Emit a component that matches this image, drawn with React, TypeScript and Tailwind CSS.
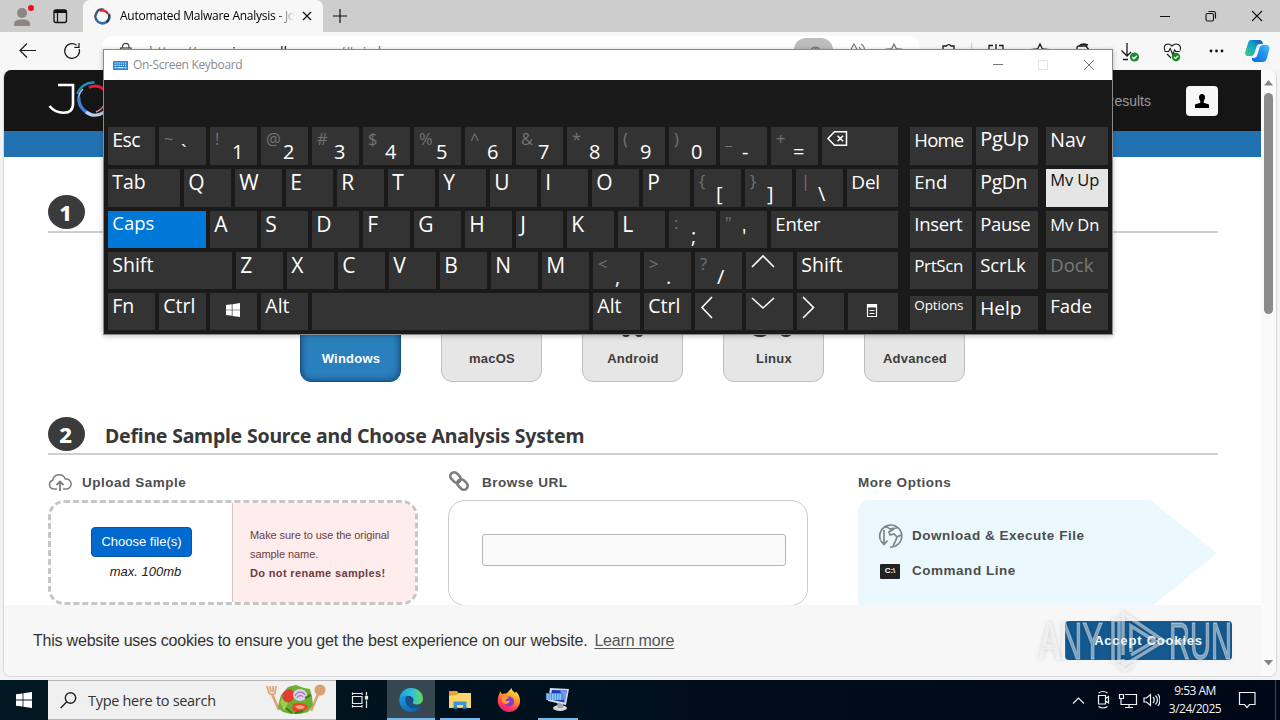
import React from "react";

type Key = {
  label?: string;
  alt?: string;
  w: string;
  icon?: React.ReactNode;
  cls?: string;
  box?: string;
};

const U = "w-[47px]";
const big = "text-[21px] leading-[26px]";
const k = (label: string, w = U, cls = "text-[19.5px] leading-[26px]", box = "bg-[#333333]"): Key => ({ label, w, cls, box });
const l = (label: string): Key => k(label, U, big);
const d = (alt: string, label: string): Key => ({ label, alt, w: U });
const ic = (icon: React.ReactNode, w = U): Key => ({ icon, w });

const Chevron = ({ points }: { points: string }) => (
  <svg width="47" height="37" fill="none" stroke="#fff" strokeWidth="1.6">
    <polyline points={points} />
  </svg>
);

const WinLogo = ({ size }: { size: number }) => (
  <svg width={size} height={size} viewBox="0 0 16 16" fill="#fff">
    <path d="M0 2.3 6.6 1.4V7.6H0zM7.4 1.3 16 0V7.6H7.4zM0 8.4H6.6V14.6L0 13.7zM7.4 8.4H16V16L7.4 14.8z" />
  </svg>
);

const rows: { h: string; keys: Key[]; side: Key[] }[] = [
  {
    h: "h-[38px]",
    keys: [
      k("Esc", U, "text-[19.5px] leading-[26px] tracking-[-0.6px]"),
      d("~", "`"), d("!", "1"), d("@", "2"), d("#", "3"), d("$", "4"), d("%", "5"), d("^", "6"),
      d("&", "7"), d("*", "8"), d("(", "9"), d(")", "0"), d("_", "-"), d("+", "="),
      ic(
        <svg width="76" height="38" fill="none" stroke="#fff" strokeWidth="1.5">
          <path d="M12.5 4.8H24.5V18.2H12.5L6 11.5zM15.500 8.700l5.600 5.600M21.100 8.700l-5.600 5.600" />
        </svg>,
        "w-[76px]",
      ),
    ],
    side: [
      k("Home", "w-[62px]", "text-[18.5px] leading-[26px] tracking-[-0.8px]"),
      k("PgUp", "w-[62px]", "text-[20px] leading-[24px] tracking-[-0.3px]"),
      k("Nav", "w-[62px]"),
    ],
  },
  {
    h: "h-[38px]",
    keys: [
      k("Tab", "w-[72px]"), l("Q"), l("W"), l("E"), l("R"), l("T"), l("Y"), l("U"), l("I"), l("O"), l("P"),
      d("{", "["), d("}", "]"), d("|", "\\"), k("Del", "w-[51px]", "text-[19px] leading-[26px] tracking-[-0.2px]"),
    ],
    side: [
      k("End", "w-[62px]", "text-[18.5px] leading-[26px]"),
      k("PgDn", "w-[62px]", "text-[19.5px] leading-[25px] tracking-[-0.4px]"),
      k("Mv Up", "w-[62px]", "text-[16.5px] leading-[22px] tracking-[-0.1px] text-[#111]", "bg-[#e5e5e5]"),
    ],
  },
  {
    h: "h-[37px]",
    keys: [
      k("Caps", "w-[98px]", "text-[18.5px] leading-[24px]", "bg-[#0078d7]"),
      l("A"), l("S"), l("D"), l("F"), l("G"), l("H"), l("J"), l("K"), l("L"),
      d(":", ";"), d("\"", "'"), k("Enter", "w-[127px]", "text-[18.5px] leading-[26px] tracking-[-0.2px]"),
    ],
    side: [
      k("Insert", "w-[62px]", "text-[18.5px] leading-[26px] tracking-[-0.3px]"),
      k("Pause", "w-[62px]", "text-[18.5px] leading-[26px] tracking-[-0.4px]"),
      k("Mv Dn", "w-[62px]", "text-[16.5px] leading-[28px] tracking-[-0.1px]"),
    ],
  },
  {
    h: "h-[37px]",
    keys: [
      k("Shift", "w-[124px]"), l("Z"), l("X"), l("C"), l("V"), l("B"), l("N"), l("M"),
      d("<", ","), d(">", "."), d("?", "/"), ic(<Chevron points="6,15 17,4 28,15" />), k("Shift", "w-[101px]"),
    ],
    side: [
      k("PrtScn", "w-[62px]", "text-[17px] leading-[28px] tracking-[-0.4px]"),
      k("ScrLk", "w-[62px]", "text-[18.5px] leading-[26px] tracking-[-0.1px]"),
      k("Dock", "w-[62px]", "text-[18.5px] leading-[26px] text-[#7a7a7a]"),
    ],
  },
  {
    h: "h-[37px]",
    keys: [
      k("Fn"), k("Ctrl"),
      ic(<div className="flex w-full justify-center pr-[2px] pt-[10px]"><WinLogo size={14} /></div>),
      k("Alt"), ic(null, "w-[277px]"), k("Alt"), k("Ctrl"),
      ic(<Chevron points="17,4 7,14.5 17,25" />),
      ic(<Chevron points="6,5 17,15 28,5" />),
      ic(<Chevron points="6,4 16.5,14.5 6,25" />),
      ic(
        <svg width="50" height="37" fill="none" stroke="#fff" strokeWidth="1.2">
          <path d="M19.500 11.500h9v12h-9zM21.500 17.500h5M21.500 20.500h5" />
          <path d="M19 13h10" strokeWidth="3" />
        </svg>,
        "w-[50px]",
      ),
    ],
    side: [
      k("Options", "w-[62px]", "text-[13.5px] leading-[19px] tracking-[-0.1px]", "bg-[#333333] mt-[3px]"),
      k("Help", "w-[62px]", "text-[19px] leading-[25px]", "bg-[#333333] mt-[3px]"),
      k("Fade", "w-[62px]", "text-[18.5px] leading-[26px]"),
    ],
  },
];

function KeyCap({ w, label, alt, icon, cls, box }: Key) {
  if (icon !== undefined) return <div className={`${w} shrink-0 overflow-hidden bg-[#333333]`}>{icon}</div>;
  if (alt)
    return (
      <div className={`${w} flex shrink-0 bg-[#333333]`}>
        <span className="w-[22px] shrink-0 pl-[5px] text-[16.5px] leading-[23px] text-[#737373]">{alt}</span>
        <span className="mt-[13px] text-[20px] leading-[24px] text-white">{label}</span>
      </div>
    );
  return (
    <div className={`${w} ${box ?? "bg-[#333333]"} shrink-0 whitespace-nowrap pl-[4.3px] text-white`}>
      <span className={`${cls} block`}>{label}</span>
    </div>
  );
}

function Keyboard() {
  return (
    <div className="absolute left-[103px] top-[49px] flex h-[286px] w-[1010px] flex-col border border-[#8a8a8a] bg-[#1a1a1a] font-['Open_Sans',sans-serif] shadow-[0_1px_5px_rgba(0,0,0,.25)]">
      <div className="flex h-[30px] shrink-0 items-center bg-white pl-[9px]">
        <svg width="15" height="9" viewBox="0 0 15 9">
          <rect width="15" height="9" rx=".6" fill="#2d84d0" />
          <path d="M1.5 2h12M1.5 4.3h12" stroke="#fff" strokeWidth="1.1" strokeDasharray="1.2 .9" />
          <path d="M1.5 6.8h2M4.5 6.8h6M11.5 6.8h2" stroke="#fff" strokeWidth="1.1" />
        </svg>
        <span className="ml-[5px] text-[12px] leading-[16px] tracking-[-0.33px] text-[#8c8c8c]">On-Screen Keyboard</span>
        <svg className="ml-auto mr-[17px]" width="102" height="12" fill="none">
          <path d="M0 5.5h10" stroke="#777" />
          <rect x="45.5" y="1.5" width="9" height="9" stroke="#e4e4e4" />
          <path d="M91 1l10 10M101 1 91 11" stroke="#777" />
        </svg>
      </div>
      <div className="flex flex-col gap-[4px] pl-[4px] pt-[47px]">
        {rows.map((r, i) => (
          <div key={i} className={`flex ${r.h}`}>
            <div className="flex gap-[4px]">{r.keys.map((x, j) => <KeyCap key={j} {...x} />)}</div>
            <div className="ml-[12px] flex gap-[4px]">{r.side.slice(0, 2).map((x, j) => <KeyCap key={j} {...x} />)}</div>
            <div className="ml-[8px] flex">{r.side.slice(2).map((x, j) => <KeyCap key={j} {...x} />)}</div>
          </div>
        ))}
      </div>
    </div>
  );
}

function TabStrip() {
  return (
    <div className="flex h-[32px] shrink-0 bg-[#cdcdcd] font-['Open_Sans',sans-serif]">
      <svg width="83" height="32" className="shrink-0" fill="none">
        <circle cx="22" cy="13" r="5" fill="#8c8582" />
        <path d="M14 26v-2.5c0-2.8 3.6-4 8-4s8 1.2 8 4V26z" fill="#8c8582" />
        <circle cx="31" cy="8" r="3" fill="#e81123" />
        <rect x="54" y="10" width="12.5" height="12.5" rx="2" stroke="#111" strokeWidth="1.3" />
        <path d="M54 11.5h12.5" stroke="#111" strokeWidth="3" />
        <path d="M57.5 12v10" stroke="#111" strokeWidth="1.2" />
      </svg>
      <div className="flex w-[240px] items-center rounded-t-[7px] bg-[#f7f7f7] pl-[11px]">
        <svg width="17" height="17" viewBox="0 0 17 17" fill="none" className="shrink-0">
          <path d="M3 3.5A7 7 0 0 1 9.5 1.5" stroke="#2b3f60" strokeWidth="2" />
          <path d="M6 2.8A6.2 6.2 0 0 1 14 6" stroke="#e0243a" strokeWidth="2.4" />
          <path d="M14.8 6A7 7 0 0 1 12 14.5" stroke="#24425f" strokeWidth="2.6" />
          <path d="M12.5 14A7 7 0 0 1 2.2 11.5" stroke="#2f6db0" strokeWidth="2.6" />
          <path d="M2.4 12A7 7 0 0 1 3.5 3.6" stroke="#3d5a80" strokeWidth="2.4" />
        </svg>
        <span className="ml-[9px] w-[174px] overflow-hidden whitespace-nowrap bg-gradient-to-r from-black from-88% to-[#f7f7f7] bg-clip-text text-[12px] leading-[18px] tracking-[-0.25px] text-transparent">
          Automated Malware Analysis - Joe Sandbox
        </span>
        <svg width="10" height="10" className="ml-[8px] shrink-0" stroke="#111" strokeWidth="1.3"><path d="M1 1l8 8M9 1 1 9" /></svg>
      </div>
      <svg width="14" height="14" className="ml-[10px] mt-[9px]" stroke="#111" strokeWidth="1.2"><path d="M7 0v14M0 7h14" /></svg>
      <svg width="104" height="12" className="ml-auto mr-[16px] mt-[10px]" fill="none" stroke="#111" strokeWidth="1.1">
        <path d="M0 6.5h10M92 1l10 10M102 1 92 11" />
        <rect x="46" y="3.5" width="7.5" height="7.5" rx="1.5" />
        <path d="M48.5 1.5h5a2 2 0 0 1 2 2v5" />
      </svg>
    </div>
  );
}

function Toolbar() {
  return (
    <div className="flex h-[38px] shrink-0 bg-[#f7f7f7] font-['Open_Sans',sans-serif]">
      <svg width="103" height="38" fill="none" stroke="#1a1a1a" strokeWidth="1.2" className="shrink-0">
        <path d="M36 18.5H20.5M27 11.5l-7 7 7 7" />
        <path d="M79.3 17.2A7.4 7.4 0 1 1 76.5 13M79 11v4.4h-4.6" />
      </svg>
      <div className="mt-[4px] flex h-[30px] w-[816px] rounded-[9px] bg-white">
        <svg width="46" height="30" fill="none" stroke="#444" strokeWidth="1.2">
          <path d="M19.5 12V10.500a3.2 3.2 0 0 1 6.4 0V12" />
          <rect x="17.5" y="12" width="10.5" height="9" />
        </svg>
        <span className="mt-[5px] text-[14px] leading-[21px] text-[#777] tracking-[-0.1px]">
          https://<span className="tracking-[0px] text-black">www.joesandbox.com</span>/<span className="tracking-[-1px]">#windows</span>
        </span>
        <svg width="130" height="30" className="ml-auto" fill="none" stroke="#777" strokeWidth="1.2">
          <rect x="5" y="2" width="39" height="26" rx="12" fill="#bdbdbd" stroke="none" />
          <path d="M22 14a5 5 0 0 1 9 0M24.5 14a2.5 2.5 0 0 1 4.5 0" />
          <path d="M60 17l5-9 5 9M72 8a6 6 0 0 1 3 7M70 11a4 4 0 0 1 1.500 4" />
          <path d="M105 8l2.200 4.600 5.200.6-4 3.500 1 5-4.400-2.500-4.400 2.500 1-5-4-3.500 5.200-.6z" />
        </svg>
      </div>
      <svg width="361" height="38" fill="none" stroke="#1a1a1a" strokeWidth="1.3" className="shrink-0">
        <path d="M24 20v-6h3.500a2.500 2.500 0 0 1 4.500 0h3v6" />
        <path d="M52.500 11v14" stroke="#d0d0d0" />
        <path d="M74 13.500h-4v8M77 12v10M80 13.500h4v8" />
        <path d="M121 12l2.400 5 5.600.6-4 4h-8l-4-4 5.600-.6z" />
        <path d="M158 18v-2a2 2 0 0 1 2-2h7l3 4M160 14a7 7 0 0 1 5-2l4 1" />
        <path d="M208 11v13M202.500 18.500 208 24l4-4M204 27.500h5" />
        <circle cx="215.500" cy="25" r="4.600" fill="#23843b" stroke="none" />
        <path d="M213.300 25l1.600 1.700 2.900-3" stroke="#fff" />
        <path d="M246 19c-2-4 0-7 3-7 2 0 3 1 4 2 1-1 2-2 4-2 4 0 5.500 3.500 4 6.500M245.500 19.500h4l1.700-3 2.500 6 2-4.500 1 1.500h4M248 22l4 4" strokeWidth="1.100" />
        <circle cx="257" cy="25" r="4.200" fill="#16851b" stroke="none" />
        <path d="M255 25l1.500 1.600 2.700-2.900" stroke="#fff" />
        <g fill="#111" stroke="none"><circle cx="292" cy="19" r="1.400" /><circle cx="297.500" cy="19" r="1.400" /><circle cx="303" cy="19" r="1.400" /></g>
        <defs>
          <linearGradient id="cpA" x1="0" y1="1" x2="1" y2="0"><stop offset="0" stopColor="#39c97d" /><stop offset=".5" stopColor="#18a9c9" /><stop offset="1" stopColor="#0d55b8" /></linearGradient>
          <linearGradient id="cpB" x1="0" y1="1" x2="1" y2="0"><stop offset="0" stopColor="#0b6fd6" /><stop offset=".6" stopColor="#2394f0" /><stop offset="1" stopColor="#45c7f5" /></linearGradient>
        </defs>
        <path d="M332 8h8c2.500 0 3.500 1.500 4 4h-3c-2 0-3 1-3.500 3l-2 6c-.6 2-1.500 3-3.500 3h-2.500c-3 0-3.800-2-3-4.500L329 11c.6-2 1.500-3 3-3z" fill="url(#cpA)" stroke="none" />
        <path d="M344 13h3c3 0 4 2 3.200 4.500L348 26c-.6 2.500-2 4-4.500 4h-7c-2.500 0-3.500-1.500-3.800-4h2c2 0 3-1 3.600-3l2-6.500c.6-2.300 1.500-3.500 3.700-3.500z" fill="url(#cpB)" stroke="none" />
      </svg>
    </div>
  );
}

const label = "text-[13.5px] font-bold leading-[16px] tracking-[0.52px] text-[#4d4d4d]";

function StepHead({ n, title }: { n: string; title?: string }) {
  return (
    <div className="ml-[44px] mr-[43px] flex h-[38px] shrink-0 items-start border-b-2 border-[#cfcfcf] font-['Noto_Sans',sans-serif]">
      <span className="flex h-[34px] w-[37px] items-center justify-center rounded-[50%] bg-[#3b3b3b] pr-[2px] text-[22px] font-extrabold leading-none text-white">{n}</span>
      {title && <span className="ml-[20px] mt-[6px] whitespace-nowrap text-[19.5px] font-bold leading-[26px] tracking-[-0.22px] text-[#383838]">{title}</span>}
    </div>
  );
}

function Tile({ name, active, children }: { name: string; active?: boolean; children?: React.ReactNode }) {
  return (
    <div
      className={`flex h-[101px] w-[101px] flex-col items-center justify-end rounded-[11px] border pb-[14px] pl-px text-[13px] font-bold leading-[16px] tracking-[0.25px] ${
        active ? "border-[#17507c] bg-[#2980bd] text-white shadow-[inset_0_0_7px_rgba(0,30,70,.65)]" : "border-[#bfbfbf] bg-[#e6e6e6] text-[#3d3d3d]"
      }`}
    >
      {children}
      {name}
    </div>
  );
}

function Page() {
  return (
    <div className="mx-[3px] flex h-[607px] shrink-0 overflow-hidden rounded-[8px] border border-t-0 border-[#d8d8d8] bg-white font-['Liberation_Sans',Arial,sans-serif]">
      <div className="flex w-[1257px] shrink-0 flex-col">
        <div className="flex h-[61px] shrink-0 items-center bg-[#151515]">
          <svg width="100" height="61" fill="none" className="shrink-0">
            <path d="M54 15h15v19c0 6-3.500 8.700-9.500 8.700S49.500 41 45.500 36" stroke="#fff" strokeWidth="2.600" />
            <path d="M73.500 24a16 16 0 0 1 17-11.500" stroke="#1f8fc0" strokeWidth="2.500" />
            <path d="M85 17.500a14 14 0 0 1 15 2" stroke="#ee1c3a" strokeWidth="3" />
            <path d="M79 19a15 15 0 0 0-3 18" stroke="#9fc3ee" strokeWidth="1.500" />
            <path d="M75 27a16 16 0 0 0 12 17" stroke="#3f7fd6" strokeWidth="3.200" />
            <path d="M82 42a14 14 0 0 0 18 0" stroke="#bcd0ee" strokeWidth="3" />
            <path d="M92 42a16 16 0 0 0 8-7" stroke="#e58a92" strokeWidth="1.500" />
          </svg>
          <span className="ml-auto mr-[35px] text-[14px] font-light leading-[18px] text-[#9b9b9b]">Results</span>
          <span className="mr-[43px] flex h-[30px] w-[32px] items-center justify-center rounded-[4px] bg-[#f7f7f7]">
            <svg width="14" height="14"><path d="M7 0c2 0 3 1.500 3 3.500C10 5.500 9 6.500 8.700 7v1.800L14 10.500V14H0v-3.500L5.300 8.800V7C5 6.500 4 5.500 4 3.500 4 1.500 5 0 7 0z" fill="#000" /></svg>
          </span>
        </div>
        <div className="h-[26px] shrink-0 bg-[#2271b1]" />
        <div className="h-[38px] shrink-0" />
        <StepHead n="1" />
        <div className="mt-[48px] flex shrink-0 gap-[40px] pl-[296px]">
          <Tile name="Windows" active />
          <Tile name="macOS" />
          <Tile name="Android">
            <svg width="24" height="8" className="mb-[12px]" fill="#333"><rect x="1" y="-5" width="8" height="11" rx="4" /><rect x="14" y="-5" width="8" height="11" rx="4" /></svg>
          </Tile>
          <Tile name="Linux">
            <svg width="44" height="8" className="mb-[12px]" fill="#333"><ellipse cx="8" cy="2" rx="8" ry="4" /><ellipse cx="34" cy="2" rx="6" ry="4" /></svg>
          </Tile>
          <Tile name="Advanced" />
        </div>
        <div className="h-[35px] shrink-0" />
        <StepHead n="2" title="Define Sample Source and Choose Analysis System" />
        <div className="flex h-[150px] shrink-0 overflow-hidden pl-[44px]">
          <div className="w-[370px]">
            <div className="flex h-[45px] items-center pt-[11px]">
              <svg width="24" height="18" fill="none" stroke="#7d7d7d" strokeWidth="1.500">
                <path d="M9 15H5.500a4.500 4.500 0 0 1-.7-8.800A6.500 6.500 0 0 1 17.300 5a5 5 0 0 1 1.500 10H15" />
                <path d="M12 17V7.500M8.500 11 12 7.500l3.500 3.500" strokeWidth="1.800" />
              </svg>
              <span className={`${label} ml-[10px]`}>Upload Sample</span>
            </div>
            <div className="flex h-[105px] overflow-hidden rounded-[16px] border-[3px] border-dashed border-[#c6c6c6]">
              <div className="flex w-[182px] shrink-0 flex-col items-center border-r border-[#d9c4c4] pt-[24px]">
                <span className="flex h-[30px] w-[101px] items-center justify-center rounded-[4px] border border-[#0a56a6] bg-[#0069cf] text-[13px] leading-[16px] text-white">Choose file(s)</span>
                <span className="ml-[8px] mt-[6px] text-[13px] italic leading-[18px] text-[#222]">max. 100mb</span>
              </div>
              <div className="grow bg-[#ffecec] pl-[17px] pt-[23px] text-[11px] leading-[19px] text-[#6b3d42]">
                <p className="tracking-[-0.07px]">Make sure to use the original<br />sample name.</p>
                <p className="whitespace-nowrap font-bold tracking-[0.35px]">Do not rename samples!</p>
              </div>
            </div>
          </div>
          <div className="ml-[30px] w-[360px]">
            <div className="flex h-[45px] items-center pt-[11px]">
              <svg width="24" height="24" fill="none" stroke="#7d7d7d" strokeWidth="2.600" className="-mt-[4px]">
                <rect x="-5.800" y="-3.900" width="11.600" height="7.800" rx="3.900" transform="translate(7.500 8.500) rotate(45)" />
                <rect x="-5.800" y="-3.900" width="11.600" height="7.800" rx="3.900" transform="translate(14.500 15.500) rotate(45)" />
              </svg>
              <span className={`${label} ml-[10px]`}>Browse URL</span>
            </div>
            <div className="h-[106px] rounded-[17px] border border-[#cccccc] pl-[33px] pt-[33px]">
              <div className="h-[32px] w-[304px] rounded-[3px] border border-[#b5b5b5] bg-[#fafafa]" />
            </div>
          </div>
          <div className="ml-[50px] w-[360px]">
            <div className="flex h-[45px] items-center pt-[11px]"><span className={label}>More Options</span></div>
            <div className="flex h-[110px] flex-col rounded-[10px] bg-[#ebf9ff] pl-[20px] pt-[23px] [clip-path:polygon(0_0,292px_0,359px_53px,292px_108px,0_108px)]">
              <div className="flex h-[26px] items-center">
                <svg width="26" height="26" fill="none" stroke="#7d8587" strokeWidth="1.700" className="-ml-px">
                  <path d="M3.500 17A11 11 0 1 1 13 24M8 4c3 0 4 1 5 2 3-1 5-1 7-1M7 7V21M3.500 17.500 7 21.500l3.500-4M17 6l-5 3 1 3 4-1 3 3-1 3-3 6M24 12l-4 2" />
                </svg>
                <span className={`${label} ml-[9px]`}>Download &amp; Execute File</span>
              </div>
              <div className="mt-[9px] flex h-[26px] items-center">
                <span className="ml-[2px] flex h-[15px] w-[20px] items-center justify-center rounded-[1px] bg-[#222] text-[8px] font-bold leading-none text-white">C:\</span>
                <span className={`${label} ml-[12px]`}>Command Line</span>
              </div>
            </div>
          </div>
        </div>
        <div className="flex h-[71px] shrink-0 items-center bg-[#f7f7f7] pl-[29px] text-[#333]">
          <span className="text-[16px] leading-[20px] tracking-[-0.21px]">This website uses cookies to ensure you get the best experience on our website.</span>
          <span className="ml-[7px] text-[16px] leading-[20px] tracking-[-0.2px] text-[#555] underline underline-offset-2">Learn more</span>
          <span className="ml-auto mr-[29px] flex h-[39px] w-[167px] items-center justify-center rounded-[4px] bg-[#145a91] text-[13px] font-bold leading-[16px] tracking-[0.8px] text-white">Accept Cookies</span>
        </div>
      </div>
      <div className="flex grow flex-col items-center bg-[#fafafa] pt-[10px]">
        <svg width="9" height="6" fill="#858585"><path d="M4.500 0 9 5.500H0z" /></svg>
        <div className="mt-[7px] h-[221px] w-[9px] rounded-[5px] bg-[#8b8b8b]" />
        <svg width="9" height="6" fill="#858585" className="mb-[10px] mt-auto"><path d="M4.500 5.500 9 0H0z" /></svg>
      </div>
    </div>
  );
}

function Watermark() {
  return (
    <div className="absolute left-[1039px] top-[606px] flex h-[70px] w-[196px] items-center font-['Liberation_Sans',Arial,sans-serif] text-[51px] leading-none text-white/45 [-webkit-text-stroke:1.500px_rgba(255,255,255,.35)] [filter:drop-shadow(0_0_2px_rgba(0,0,0,.3))]">
      <span className="w-[70px] origin-left scale-x-[0.61] whitespace-nowrap pt-px">ANY</span>
      <svg width="60" height="68" fill="none" stroke="rgba(255,255,255,.5)" strokeWidth="3.500" className="shrink-0">
        <path d="M4 56V13h6v42M14 48V6l41 28-41 25v-7M22 45V19l24 15-24 14M9 58l7 5 8-5" />
      </svg>
      <span className="w-[64px] origin-left scale-x-[0.57] whitespace-nowrap pt-px">RUN</span>
    </div>
  );
}

function Taskbar() {
  return (
    <div className="mt-auto flex h-[40px] shrink-0 bg-gradient-to-r from-[#001822] to-[#000716] font-['Open_Sans',sans-serif]">
      <div className="flex w-[48px] items-center justify-center"><WinLogo size={16} /></div>
      <div className="flex w-[288px] items-center border-y border-[#b5b5b5] bg-[#f0f0f0] pl-[12px]">
        <svg width="17" height="17" fill="none" stroke="#222" strokeWidth="1.400"><circle cx="10.500" cy="6" r="5.200" /><path d="M6.800 9.700.7 16" /></svg>
        <span className="ml-[11px] mt-[2px] text-[14.500px] leading-[20px] tracking-[-0.3px] text-[#333]">Type here to search</span>
        <svg width="62" height="34" className="ml-auto mr-[9px]" fill="none">
          <path d="M7 11l7 16" stroke="#d9a374" strokeWidth="2.600" />
          <path d="M2 3l2 7q3 3 6 0l1-7M5 3l1 6M8 3v6" stroke="#e0a878" strokeWidth="1.800" />
          <path d="M54 9 46 28" stroke="#d9a374" strokeWidth="2.600" />
          <circle cx="55" cy="7" r="5.500" fill="#d9a070" />
          <path d="M16 12l7-8 8-2 8 3 6 1 2 8 1 8-5 7-8 2-9 0-8-2-5-4 1-6z" fill="#6fae35" />
          <path d="M15 19l6-9 6-1-5 13-3 6z" fill="#9cd04a" />
          <path d="M20 8c4-3 9-2 9 4s-4 8-8 7-5-8-1-11z" fill="#df3f2c" />
          <path d="M28 21c4-2 12-1 15 2-1 6-12 8-16 3z" fill="#e8452d" />
          <path d="M30 23c4-1 8-1 10 1-2 3-8 3-10-1z" fill="#f5a27c" />
          <ellipse cx="35" cy="12" rx="7" ry="6" fill="#ded0ea" />
          <path d="M30 13c2-5 8-5 10-1M32 15c1-3 5-3 6-1" stroke="#a877b8" strokeWidth="1.200" />
          <path d="M40 15l6-3M21 25l6 5M30 30l8-2" stroke="#3d7d1e" strokeWidth="2" />
        </svg>
      </div>
      <div className="flex w-[51px] items-center justify-center pr-[3px]">
        <svg width="18" height="16" fill="none" stroke="#e8e8e8" strokeWidth="1.200"><path d="M1.500 3V.5M1.500 1.500h9.500M11 .5V3M1.500 4.500H11v7H1.500zM1.500 15.500V13M1.500 14.500H11M11 15.500V13M15.500 0v3.500M15.500 8.500V16" /><rect x="14.500" y="4.500" width="2" height="2.500" fill="#fff" /></svg>
      </div>
      <div className="flex w-[48px] flex-col items-center border-b-2 border-[#76b9ed] bg-[#36474f] pt-[8px]">
        <svg width="24" height="24" viewBox="0 0 24 24">
          <defs>
            <linearGradient id="eA" x1="0" x2="1"><stop offset="0" stopColor="#1c9de0" /><stop offset=".55" stopColor="#35c1d6" /><stop offset="1" stopColor="#63d957" /></linearGradient>
            <linearGradient id="eB" x1="0" x2="1" y1="0" y2="1"><stop offset="0" stopColor="#1f9be6" /><stop offset="1" stopColor="#0b58ad" /></linearGradient>
          </defs>
          <path d="M.3 11C1 4.500 6 0 12 0c7 0 12 5 12 10.500 0 4-3 6-6.500 6-3 0-4.300-1.300-3.500-2.500 1.700-3-.5-6-5-6-4 0-7 1.500-8.700 3z" fill="url(#eA)" />
          <path d="M.3 11C2 8.500 5 7 8.500 7.500 5.500 10 6 14 8 17c2.700 3.600 8 4.500 13.500 2C19 22.500 16 24 12 24 5 24-.3 18 .3 11z" fill="url(#eB)" />
          <path d="M8.500 8c-2 2.500-1.700 6 .5 9 2.700 3.400 8 4 12.800 1.600-3 .5-7-.8-8.300-3.600-.8-1.800.8-2 .6-3.800C13.900 9 11.500 7.600 8.500 8z" fill="#14528f" />
        </svg>
      </div>
      <div className="ml-[5px] flex w-[40px] flex-col items-center border-b-2 border-[#76b9ed] pt-[10px]">
        <svg width="22" height="20"><path d="M0 1h8l2 2.500h11V8H0z" fill="#e8a33a" /><path d="M0 6l8-1 2-2h12v15H0z" fill="#fbd66d" /><path d="M4.500 18v-6.500h13V18h-3.500v-3h-6v3z" fill="#3a94d6" /><path d="M4.500 19v-2h4v2zM13.500 19v-2h4v2z" fill="#1f78bd" /></svg>
      </div>
      <div className="ml-[5px] flex w-[48px] flex-col items-center pr-px pt-[8px]">
        <svg width="24" height="24" viewBox="0 0 24 24">
          <defs><linearGradient id="ff" x1=".8" y1="0" x2=".3" y2="1"><stop offset="0" stopColor="#fff04a" /><stop offset=".4" stopColor="#ff9b28" /><stop offset=".75" stopColor="#ff3b54" /><stop offset="1" stopColor="#d61c88" /></linearGradient></defs>
          <path d="M3.500 3.500 5 6c1-.5 2.500-.7 4-.3C10.500 5 12 3 14.500 0c.2 2 2 3.500 3.500 5l1-1.500c3 3 4 6 4 9.500 0 6-5 11-11 11S.7 19 .7 13C.7 9 2 6 3.500 3.500z" fill="url(#ff)" />
          <circle cx="12" cy="13.500" r="5" fill="#7b3ed1" />
          <path d="M5 8.500c3-1 5.500 0 7.500 1.500-2 0-3 1-4 2.500 1.500 1 3 .5 4.500 0-1 3.500-5 4.500-7.500 2z" fill="#ff9a2e" />
        </svg>
      </div>
      <div className="ml-[5px] flex w-[40px] flex-col items-center border-b-2 border-[#76b9ed] pr-px pt-[7px]">
        <svg width="25" height="25"><ellipse cx="15" cy="21" rx="7" ry="3" fill="#d5d9dc" /><path d="M12 16l6 1v4h-5z" fill="#9aa4ad" /><path d="M5 1 24 2 21 18 3 14z" fill="#d5dcec" /><path d="M7 3 22 3.500 19.500 15.500 5 12.500z" fill="#2038b5" /><path d="M15 3.500l7 .2L19.500 15z" fill="#7b93e8" /><path d="M1 6h17v7H1z" fill="#4597df" /><path d="M2 8h15M2 10h15M2 12h15" stroke="#d9f0ff" strokeDasharray="1.500 1" /></svg>
      </div>
      <svg width="90" height="40" className="ml-auto" fill="none" stroke="#f0f0f0" strokeWidth="1.200">
        <path d="M3 23.500l5.500-5.500 5.500 5.500" />
        <path d="M28.500 15.500h7v8.500h-7zM35.500 18.500l3-2v6.500l-3-2M28.500 13q4.500-3 9 0M28.500 26.500q4.500 3 9 0" />
        <path d="M51 18.500v6h15.500v-10H55M59 24.500v3M55 27.500h8M49.500 14.500h4v4h-4z" />
        <path d="M74 18h2.500l4-3.500v11l-4-3.500H74zM83 17q2.500 3 0 6M85.500 15.500q4 4.500 0 9M88 14q4 6 0 12" />
      </svg>
      <div className="ml-[2px] flex w-[64px] flex-col items-center pl-[2px] pt-[2px] text-[12px] leading-[18px] tracking-[-0.5px] text-[#f2f2f2]">
        <span>9:53 AM</span>
        <span>3/24/2025</span>
      </div>
      <svg width="54" height="40" fill="none" stroke="#f0f0f0" strokeWidth="1.200">
        <path d="M13.500 12.500h15.500v12h-5.500l-2.500 3-2.500-3h-5z" />
        <path d="M49.500 0v40" stroke="#3a3f48" />
      </svg>
    </div>
  );
}

export default function App() {
  return (
    <div className="relative flex h-[720px] w-[1280px] flex-col overflow-hidden bg-[#f3f3f3]">
      <TabStrip />
      <Toolbar />
      <Page />
      <Keyboard />
      <Watermark />
      <Taskbar />
    </div>
  );
}
